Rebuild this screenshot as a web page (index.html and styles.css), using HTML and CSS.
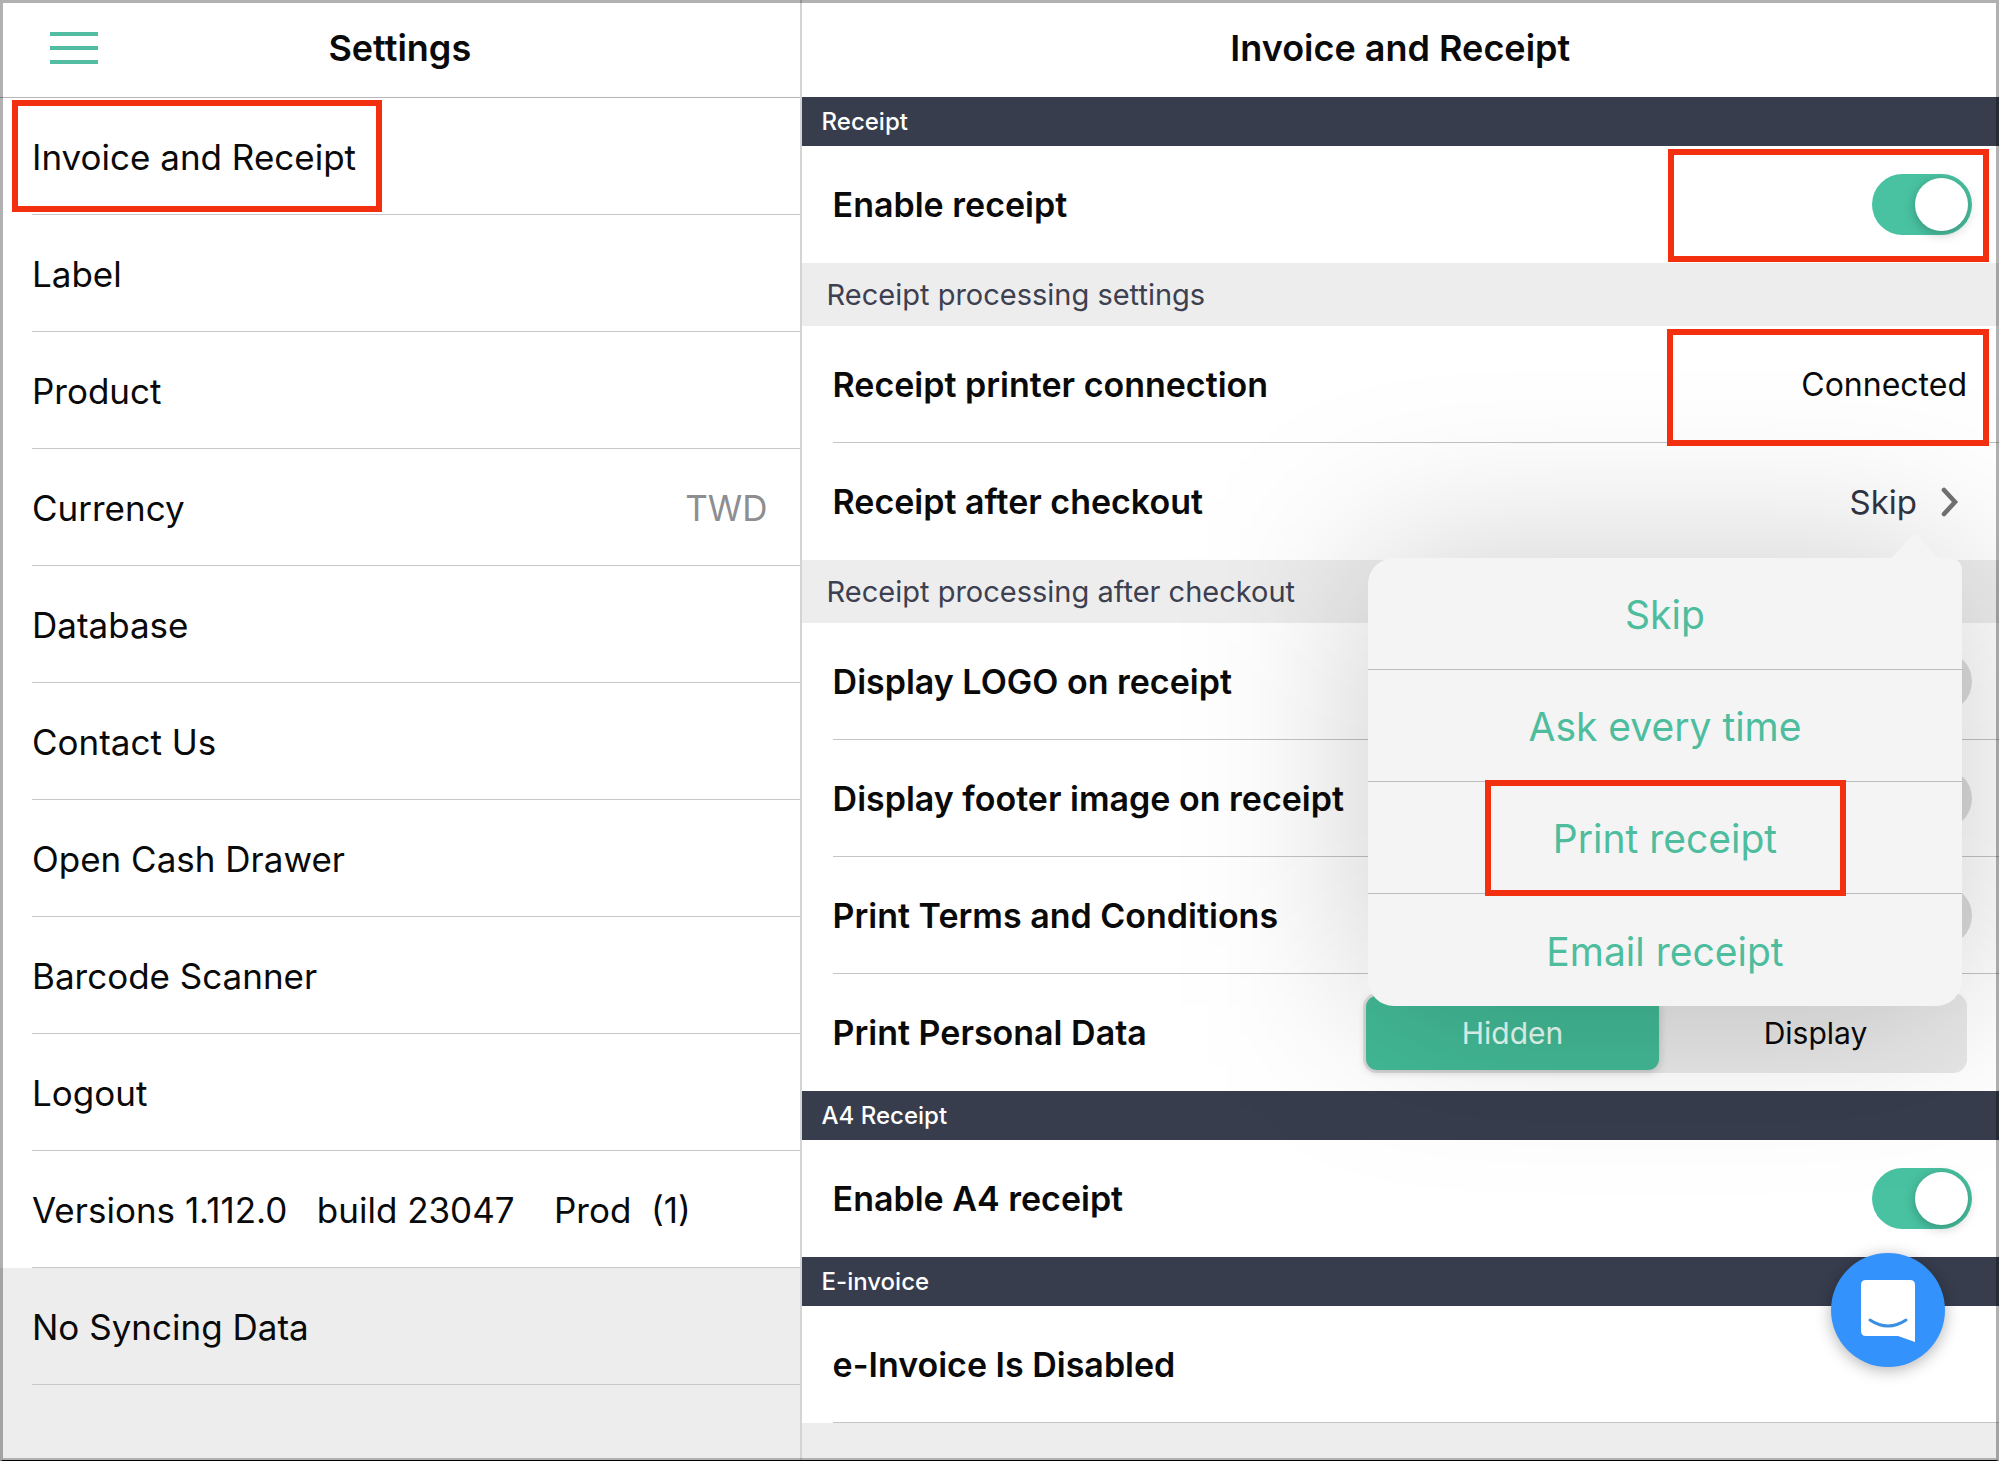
FILE: index.html
```html
<!DOCTYPE html>
<html lang="en">
<head>
<meta charset="utf-8">
<meta name="viewport" content="width=device-width, initial-scale=1">
<title>Settings</title>
<link rel="stylesheet" href="styles.css">
</head>
<body>
<div class="app">
  <nav class="sidebar" aria-label="Settings">
    <header class="topbar">
      <button class="menu-button" type="button" aria-label="Menu">
        <svg width="48" height="32" viewBox="0 0 48 32" aria-hidden="true"><path d="M0 2h48M0 16h48M0 30h48" stroke="#52bda2" stroke-width="4"/></svg>
      </button>
      <h1 class="title">Settings</h1>
    </header>
    <ul class="nav-list">
      <li class="nav-item"><a href="#invoice">Invoice and Receipt</a><span class="mark mark-nav"></span></li>
      <li class="nav-item"><a href="#label">Label</a></li>
      <li class="nav-item"><a href="#product">Product</a></li>
      <li class="nav-item"><a href="#currency">Currency <span class="nav-value">TWD</span></a></li>
      <li class="nav-item"><a href="#database">Database</a></li>
      <li class="nav-item"><a href="#contact">Contact Us</a></li>
      <li class="nav-item"><a href="#drawer">Open Cash Drawer</a></li>
      <li class="nav-item"><a href="#scanner">Barcode Scanner</a></li>
      <li class="nav-item"><a href="#logout">Logout</a></li>
      <li class="nav-item"><span class="version">Versions 1.112.0   build 23047    Prod  (1)</span></li>
      <li class="nav-item muted"><span class="version">No Syncing Data</span></li>
    </ul>
  </nav>

  <main class="detail">
    <header class="topbar">
      <h2 class="title">Invoice and Receipt</h2>
    </header>

    <h3 class="section">Receipt</h3>
    <div class="row last">
      <label class="row-label" for="enable-receipt">Enable receipt</label>
      <input class="switch" type="checkbox" role="switch" id="enable-receipt" checked>
      <span class="mark mark-switch"></span>
    </div>

    <h4 class="subsection">Receipt processing settings</h4>
    <div class="row">
      <span class="row-label">Receipt printer connection</span>
      <span class="row-value">Connected</span>
      <span class="mark mark-status"></span>
    </div>
    <div class="row last has-popover">
      <span class="row-label" id="after-label">Receipt after checkout</span>
      <button class="picker" type="button" aria-labelledby="after-label">Skip
        <svg width="18" height="30" viewBox="0 0 18 30" aria-hidden="true"><path d="M3 3l11 12L3 27" fill="none" stroke="#6f6f71" stroke-width="4.600" stroke-linecap="round" stroke-linejoin="miter"/></svg>
      </button>
      <div class="popover">
        <svg class="popover-arrow" width="56" height="26" viewBox="0 0 56 26" aria-hidden="true"><path d="M0 26C5 25 8 22 11 18L24 3.500Q28-.5 32 3.500L45 18C48 22 51 25 56 26Z" fill="#f4f4f5"/></svg>
        <button class="option" type="button">Skip</button>
        <button class="option" type="button">Ask every time</button>
        <button class="option" type="button">Print receipt<span class="mark mark-option"></span></button>
        <button class="option" type="button">Email receipt</button>
      </div>
    </div>

    <h4 class="subsection">Receipt processing after checkout</h4>
    <div class="row">
      <label class="row-label" for="logo">Display LOGO on receipt</label>
      <input class="switch" type="checkbox" role="switch" id="logo">
    </div>
    <div class="row">
      <label class="row-label" for="footer">Display footer image on receipt</label>
      <input class="switch" type="checkbox" role="switch" id="footer">
    </div>
    <div class="row">
      <label class="row-label" for="terms">Print Terms and Conditions</label>
      <input class="switch" type="checkbox" role="switch" id="terms">
    </div>
    <div class="row last">
      <span class="row-label" id="personal-label">Print Personal Data</span>
      <div class="segmented" role="group" aria-labelledby="personal-label">
        <button class="segment selected" type="button">Hidden</button>
        <button class="segment" type="button">Display</button>
      </div>
    </div>

    <h3 class="section">A4 Receipt</h3>
    <div class="row last">
      <label class="row-label" for="a4">Enable A4 receipt</label>
      <input class="switch" type="checkbox" role="switch" id="a4" checked>
    </div>

    <h3 class="section">E-invoice</h3>
    <div class="row">
      <span class="row-label">e-Invoice Is Disabled</span>
    </div>
  </main>

  <button class="chat" type="button" aria-label="Chat">
    <svg width="56" height="64" viewBox="0 0 56 64" aria-hidden="true"><path d="M6 1H50Q55 1 55 6V63L38 57H6Q1 57 1 52V6Q1 1 6 1Z" fill="#fff"/><path d="M10 41Q28 53 46 41" fill="none" stroke="#3b8fe0" stroke-width="3" stroke-linecap="round"/></svg>
  </button>
</div>
</body>
</html>
```
FILE: styles.css
```css
* { box-sizing: border-box; }

body {
  margin: 0;
  background: #ededed;
  color: #0a0a0a;
  font-family: Inter, "Liberation Sans", sans-serif;
  font-size: 35px;
}

button {
  margin: 0;
  padding: 0;
  border: 0;
  background: none;
  color: inherit;
  font: inherit;
  cursor: pointer;
}

.app {
  position: relative;
  display: grid;
  grid-template-columns: 2fr 3fr;
  min-height: 100vh;
  overflow: hidden;
}

/* translucent window frame drawn over the content */
.app::after {
  content: "";
  position: absolute;
  inset: 0;
  border: 3px solid rgba(0, 0, 0, 0.3);
  border-bottom: 1px solid #000;
  box-shadow: inset 0 -2px rgba(0, 0, 0, 0.25);
  pointer-events: none;
  z-index: 5;
}

.topbar {
  position: relative;
  display: flex;
  align-items: center;
  justify-content: center;
  height: 97px;
  padding-bottom: 2px;
  background: #fff;
}

.sidebar .topbar {
  height: 98px;
  border-bottom: 1px solid #b4b4b6;
}

.title {
  margin: 0;
  font-size: 36px;
  font-weight: 600;
}

.menu-button {
  position: absolute;
  left: 50px;
  display: flex;
}

.nav-list {
  margin: 0;
  padding: 0;
  list-style: none;
}

.nav-item {
  position: relative;
  height: 117px;
  padding-left: 32px;
  background: #fff;
}

.nav-item.muted { background: #ededed; }

.nav-item > a,
.version {
  display: flex;
  align-items: center;
  justify-content: space-between;
  height: 100%;
  padding-top: 2px;
  padding-right: 32px;
  border-bottom: 1px solid #c8c8ca;
  color: inherit;
  text-decoration: none;
  white-space: pre;
}

.nav-value { color: #8e8e92; }

.detail {
  position: relative;
  border-left: 2px solid #d4d4d6;
  overflow: hidden;
}

.section {
  display: flex;
  align-items: center;
  height: 49px;
  margin: 0;
  padding-left: 20px;
  background: #373d4d;
  color: #fff;
  font-size: 24px;
  font-weight: 500;
}

.subsection {
  display: flex;
  align-items: center;
  height: 63px;
  margin: 0;
  padding-left: 25px;
  background: #ededed;
  color: #3c4050;
  font-size: 29px;
  font-weight: 400;
}

.row {
  position: relative;
  display: flex;
  align-items: center;
  justify-content: space-between;
  height: 117px;
  padding: 0 27px 0 31px;
  background: #fff;
}

.row:not(.last)::after {
  content: "";
  position: absolute;
  left: 31px;
  right: 0;
  bottom: 0;
  border-bottom: 1px solid #c4c4c6;
}

.row-label {
  font-size: 34px;
  font-weight: 600;
}

.row-value {
  padding-right: 5px;
  font-size: 32px;
}

.picker {
  display: flex;
  align-items: center;
  gap: 24px;
  padding-right: 13px;
  color: #2e323e;
  font-size: 33px;
}

.switch {
  appearance: none;
  display: flex;
  align-items: center;
  width: 100px;
  height: 61px;
  margin: 0;
  padding: 4px;
  border-radius: 31px;
  background: #dcdcde;
}

.switch::before {
  content: "";
  width: 53px;
  height: 53px;
  border-radius: 50%;
  background: #fff;
  box-shadow: 0 3px 12px rgba(0, 0, 0, 0.25);
}

.switch:checked {
  justify-content: flex-end;
  background: #49c2a1;
}

.segmented {
  display: flex;
  width: 604px;
  height: 80px;
  margin-right: 5px;
  padding: 3px;
  border-radius: 14px;
  background: #e8e8e8;
}

.segment {
  flex: 1;
  padding-left: 8px;
  border-radius: 11px;
  color: #0a0a0a;
  font-size: 30px;
}

.segment.selected {
  flex: 0 0 49%;
  padding-left: 0;
  background: #42b995;
  color: #e4fbf3;
  box-shadow: 0 2px 8px rgba(0, 0, 0, 0.2);
}

.has-popover { z-index: 2; }

.popover {
  position: absolute;
  top: 115px;
  right: 37px;
  width: 594px;
  border-radius: 26px 12px 26px 26px;
}

/* wide soft shade around the popover */
.popover::before {
  content: "";
  position: absolute;
  inset: 0;
  background: rgba(0, 0, 0, 0.2);
  filter: blur(90px);
  z-index: -1;
}

.popover-arrow {
  position: absolute;
  top: -25px;
  right: 19px;
}

.option {
  position: relative;
  display: block;
  width: 100%;
  height: 112px;
  padding-top: 2px;
  background: #f4f4f5;
  border-bottom: 1px solid #bcbcbe;
  color: #4dbd9e;
  font-size: 39px;
}

.popover-arrow + .option { border-radius: 26px 12px 0 0; }

.option:last-child {
  border-bottom: 0;
  border-radius: 0 0 26px 26px;
}

/* red callout frames */
.mark {
  position: absolute;
  border: 6px solid #f2300f;
  pointer-events: none;
  z-index: 3;
}

.mark-nav { left: 12px; top: 2px; width: 370px; height: 112px; }
.mark-switch { right: 10px; top: 3px; width: 321px; height: 113px; }
.mark-status { right: 10px; top: 3px; width: 322px; height: 117px; }
.mark-option { left: 117px; top: -2px; width: 361px; height: 116px; }

.chat {
  position: absolute;
  right: 54px;
  bottom: 94px;
  display: flex;
  align-items: center;
  justify-content: center;
  width: 114px;
  height: 114px;
  padding-top: 2px;
  border-radius: 50%;
  background: #3392fb;
  box-shadow: 0 3px 16px rgba(0, 0, 0, 0.3);
  z-index: 4;
}
```
